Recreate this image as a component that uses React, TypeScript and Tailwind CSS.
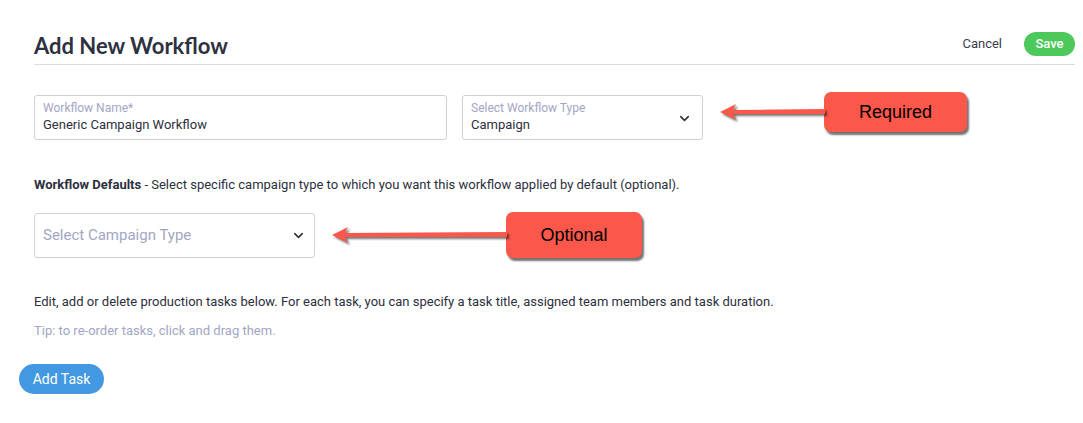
import React from 'react';
import { ChevronDown } from 'lucide-react';

const Arrow = ({ width }: { width: number }) => (
  <svg width={width} height={22} viewBox={`0 0 ${width} 22`} className="drop-shadow-[2px_2px_1px_rgba(0,0,0,0.55)]">
    <polygon points={`1,11 17,3 14,9 ${width},8 ${width},13 14,13 17,19`} fill="#fc574b" />
  </svg>
);

const Callout = ({ label, className }: { label: string; className: string }) => (
  <div className={`flex items-center justify-center rounded-[7px] bg-[#fc574b] text-black text-[18px] shadow-[2px_3px_2px_rgba(0,0,0,0.55)] ${className}`} style={{ fontFamily: '"Liberation Sans", Arial, sans-serif' }}>
    {label}
  </div>
);

const App = () => {
  return <div className="relative h-[423px] w-[1083px] overflow-hidden bg-white text-[#2f3345]" style={{ fontFamily: 'Roboto, "Liberation Sans", sans-serif' }}>
      <div className="ml-[34px] mr-[8px] pt-[32px] pb-[8px] flex items-center justify-between border-b border-[#dcdde2]">
        <h1 className="text-[22px] font-bold text-[#2e3140] leading-[24px] translate-y-[2px]" style={{ fontFamily: 'Lato, "Open Sans", sans-serif' }}>
          Add New Workflow
        </h1>
        <div className="flex items-center">
          <button className="text-[13px] text-[#3a3d50] mr-[22px]">Cancel</button>
          <button className="h-[24px] w-[51px] rounded-full bg-[#4cc95a] text-white text-[13px] font-medium">Save</button>
        </div>
      </div>

      <div className="ml-[34px] mt-[30px] flex items-start">
        <div className="w-[413px] h-[45px] rounded-[3px] border border-[#cfd1d8] px-[8px] pt-[5px]">
          <div className="text-[12px] leading-[15px] text-[#a2a6c3]">Workflow Name*</div>
          <div className="text-[13px] leading-[17px] text-[#2c2f3d]">Generic Campaign Workflow</div>
        </div>
        <div className="ml-[15px] w-[241px] h-[45px] rounded-[3px] border border-[#cfd1d8] pl-[8px] pr-[10px] pt-[5px] flex items-start justify-between">
          <div>
            <div className="text-[12px] leading-[15px] text-[#a2a6c3]">Select Workflow Type</div>
            <div className="text-[13px] leading-[17px] text-[#2c2f3d]">Campaign</div>
          </div>
          <ChevronDown className="mt-[10px] h-[15px] w-[15px] text-[#2c2f3d]" strokeWidth={2.5} />
        </div>
        <div className="ml-[16px] -mt-[3px] flex items-center">
          <Arrow width={106} />
          <Callout label="Required" className="w-[143px] h-[40px] -ml-[1px]" />
        </div>
      </div>

      <p className="ml-[34px] mt-[37px] text-[13px] leading-[16px] text-[#2c2f3d]">
        <span className="font-bold">Workflow Defaults</span> - Select specific campaign type to which you want this workflow applied by default (optional).
      </p>

      <div className="ml-[34px] mt-[19px] flex items-center">
        <div className="w-[281px] h-[45px] rounded-[3px] border border-[#cfd1d8] pl-[8px] pr-[8px] flex items-center justify-between">
          <span className="text-[15px] text-[#a2a6c3]">Select Campaign Type</span>
          <ChevronDown className="h-[15px] w-[15px] text-[#2c2f3d]" strokeWidth={2.5} />
        </div>
        <div className="ml-[16px] flex items-center">
          <Arrow width={176} />
          <Callout label="Optional" className="w-[136px] h-[46px] -ml-[1px]" />
        </div>
      </div>

      <p className="ml-[34px] mt-[36px] text-[13px] leading-[16px] text-[#2c2f3d]">
        Edit, add or delete production tasks below. For each task, you can specify a task title, assigned team members and task duration.
      </p>
      <p className="ml-[34px] mt-[13px] text-[13px] leading-[16px] text-[#a2a6c3]">
        Tip: to re-order tasks, click and drag them.
      </p>

      <button className="ml-[19px] mt-[25px] h-[30px] w-[85px] rounded-full bg-[#4299e1] text-white text-[14px]">
        Add Task
      </button>
    </div>;
};
export default App;
